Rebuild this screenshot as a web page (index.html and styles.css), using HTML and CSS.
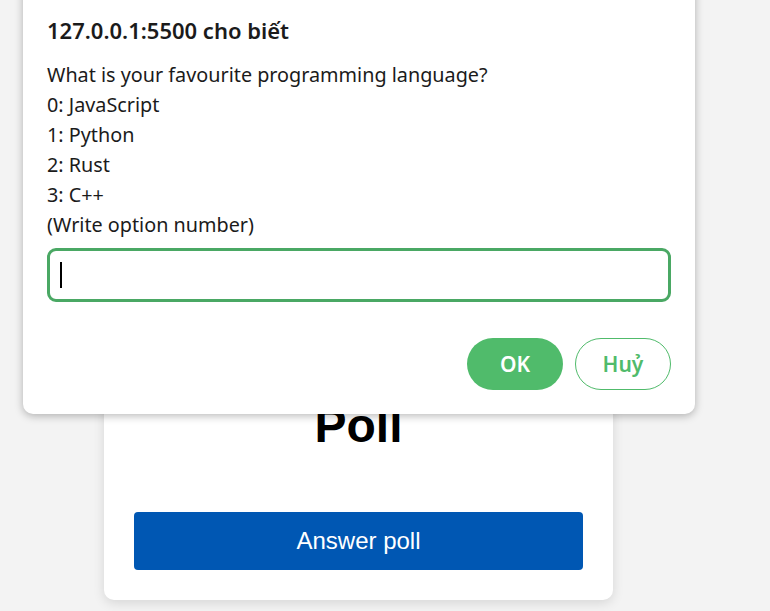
FILE: index.html
```html
<!DOCTYPE html>
<html lang="vi">
<head>
<meta charset="utf-8">
<title>Poll</title>
<link rel="stylesheet" href="styles.css">
</head>
<body>
  <main class="card">
    <h1 class="card-title">Poll</h1>
    <button class="answer-btn" type="button">Answer poll</button>
  </main>

  <div class="dialog" role="dialog">
    <h2 class="dialog-title">127.0.0.1:5500 cho biết</h2>
    <div class="dialog-message">
      <div>What is your favourite programming language?</div>
      <div>0: JavaScript</div>
      <div>1: Python</div>
      <div>2: Rust</div>
      <div>3: C++</div>
      <div>(Write option number)</div>
    </div>
    <div class="dialog-input"><span class="caret"></span></div>
    <div class="dialog-actions">
      <button class="btn btn-ok" type="button">OK</button>
      <button class="btn btn-cancel" type="button">Huỷ</button>
    </div>
  </div>
</body>
</html>
```

FILE: styles.css
```css
html, body {
  margin: 0;
  padding: 0;
}

body {
  background: #f3f3f3;
  width: 770px;
  height: 611px;
  overflow: hidden;
  position: relative;
}

.card {
  box-sizing: border-box;
  width: 509px;
  margin: 368px 0 0 104px;
  padding: 30px 30px 30px;
  background: #ffffff;
  border-radius: 10px;
  box-shadow: 0 3px 12px rgba(0, 0, 0, 0.12);
  display: flex;
  flex-direction: column;
}

.card-title {
  margin: 0 0 59px;
  font-family: "Liberation Sans", Arial, sans-serif;
  font-size: 48px;
  font-weight: 700;
  text-align: center;
  color: #000;
}

.answer-btn {
  height: 58px;
  border: none;
  border-radius: 4px;
  background: #0057b3;
  color: #ffffff;
  font-family: "Liberation Sans", Arial, sans-serif;
  font-size: 24px;
}

.dialog {
  position: absolute;
  left: 23px;
  top: -20px;
  width: 672px;
  box-sizing: border-box;
  padding: 35px 24px 24px;
  background: #ffffff;
  border-radius: 10px;
  box-shadow: 0 2px 8px rgba(0, 0, 0, 0.28);
  font-family: "Noto Sans", "Open Sans", sans-serif;
  color: #1b1b1b;
}

.dialog-title {
  margin: 0 0 15px;
  font-size: 22px;
  line-height: 30px;
  font-weight: 600;
}

.dialog-message {
  font-size: 19.8px;
  line-height: 30px;
}

.dialog-input {
  margin-top: 8px;
  height: 54px;
  box-sizing: border-box;
  border: 3px solid #4aa864;
  border-radius: 9px;
  display: flex;
  align-items: center;
  padding-left: 10px;
}

.caret {
  width: 1.5px;
  height: 26px;
  background: #000;
}

.dialog-actions {
  margin-top: 36px;
  display: flex;
  justify-content: flex-end;
  gap: 12px;
}

.btn {
  width: 96px;
  height: 52px;
  border-radius: 26px;
  font-family: "Noto Sans", "Open Sans", sans-serif;
  font-size: 21px;
  font-weight: 600;
  box-sizing: border-box;
}

.btn-ok {
  background: #50bb6b;
  border: none;
  color: #ffffff;
}

.btn-cancel {
  background: #ffffff;
  border: 1.5px solid #50bb6b;
  color: #50bb6b;
}
```
